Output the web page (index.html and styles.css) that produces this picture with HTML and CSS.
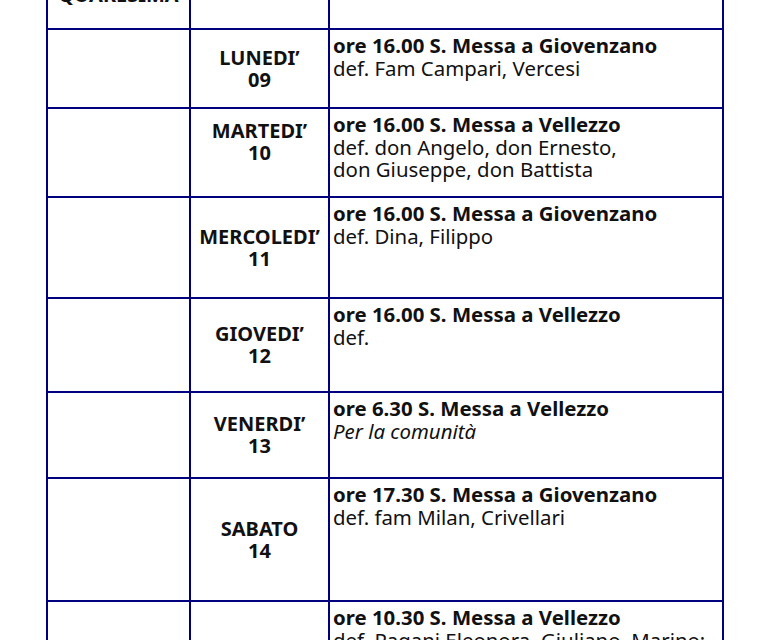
FILE: index.html
```html
<!DOCTYPE html>
<html lang="it">
<head>
<meta charset="utf-8">
<title>Calendario Messe</title>
<link rel="stylesheet" href="styles.css">
</head>
<body>
<table class="cal">
  <colgroup>
    <col class="c-week">
    <col class="c-day">
    <col class="c-info">
  </colgroup>
  <tr class="r-head">
    <td class="week">QUARESIMA</td>
    <td></td>
    <td></td>
  </tr>
  <tr class="r1">
    <td></td>
    <td class="day">LUNEDI’<br>09</td>
    <td class="info"><b>ore 16.00 S. Messa a Giovenzano</b><br>def. Fam Campari, Vercesi</td>
  </tr>
  <tr class="r2">
    <td></td>
    <td class="day day-up">MARTEDI’<br>10</td>
    <td class="info"><b>ore 16.00 S. Messa a Vellezzo</b><br>def. don Angelo, don Ernesto,<br>don Giuseppe, don Battista</td>
  </tr>
  <tr class="r3">
    <td></td>
    <td class="day">MERCOLEDI’<br>11</td>
    <td class="info"><b>ore 16.00 S. Messa a Giovenzano</b><br>def. Dina, Filippo</td>
  </tr>
  <tr class="r4">
    <td></td>
    <td class="day">GIOVEDI’<br>12</td>
    <td class="info"><b>ore 16.00 S. Messa a Vellezzo</b><br>def.</td>
  </tr>
  <tr class="r5">
    <td></td>
    <td class="day">VENERDI’<br>13</td>
    <td class="info"><b>ore 6.30 S. Messa a Vellezzo</b><br><i>Per la comunità</i></td>
  </tr>
  <tr class="r6">
    <td></td>
    <td class="day">SABATO<br>14</td>
    <td class="info"><b>ore 17.30 S. Messa a Giovenzano</b><br>def. fam Milan, Crivellari</td>
  </tr>
  <tr class="r7">
    <td></td>
    <td class="day">DOMENICA<br>15</td>
    <td class="info"><b>ore 10.30 S. Messa a Vellezzo</b><br>def. Pagani Eleonora, Giuliano, Marino;</td>
  </tr>
</table>
</body>
</html>
```

FILE: styles.css
```css
html, body {
  margin: 0;
  padding: 0;
  background: #ffffff;
}

body {
  font-family: "Noto Sans", "Open Sans", sans-serif;
  font-size: 20px;
  line-height: 22px;
  color: #111111;
}

.cal {
  border-collapse: collapse;
  table-layout: fixed;
  width: 678px;
  margin: -32px 0 0 46px;
}

.c-week { width: 143px; }
.c-day { width: 139px; }
.c-info { width: 394px; }

.cal td {
  border: 2px solid #00007f;
  padding: 0;
  vertical-align: top;
}

.cal td.week {
  font-weight: bold;
  text-align: center;
  vertical-align: bottom;
  padding-bottom: 22px;
}

.cal td.day {
  font-weight: bold;
  text-align: center;
  vertical-align: middle;
}

.cal td.day-up {
  padding-bottom: 22px;
}

.cal td.info {
  font-size: 20.4px;
  line-height: 22.6px;
  padding: 4px 2px 0 3px;
}

.r-head { height: 60px; }
.r1 { height: 79px; }
.r2 { height: 89px; }
.r3 { height: 101px; }
.r4 { height: 94px; }
.r5 { height: 86px; }
.r6 { height: 123px; }
.r7 { height: 140px; }
```
